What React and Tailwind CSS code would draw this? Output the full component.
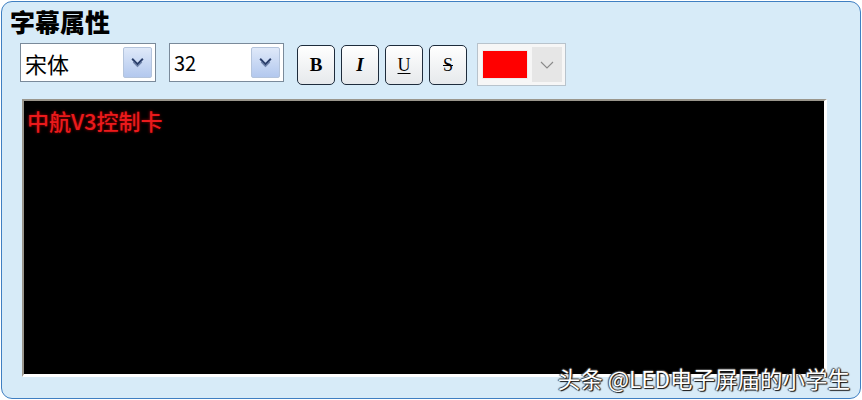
import React from "react";

const Chevron = ({ className = "" }) => (
  <svg viewBox="0 0 14 12" className={className} fill="none">
    <path d="M2 2.5 L7 7.5 L12 2.5" stroke="#2b3f6b" strokeWidth="1.8" />
    <path d="M3 5.5 L7 9.5 L11 5.5" stroke="#4a5f8b" strokeWidth="1.2" opacity="0.7" />
  </svg>
);

const Select = ({ value, width, size }) => (
  <div
    className={`flex items-center justify-between h-[39px] bg-white border border-[#7a8a9a] pl-[4px] pr-[3px] ${width}`}
  >
    <span className={`${size} leading-none text-black`} style={{ fontFamily: '"Noto Sans CJK SC", "Liberation Sans", sans-serif' }}>
      {value}
    </span>
    <div className="w-[29px] h-[31px] rounded-[2px] border border-[#b4c4dc] bg-gradient-to-b from-[#dfe9f9] to-[#b3c8ee] flex items-center justify-center">
      <Chevron className="w-[15px] h-[13px]" />
    </div>
  </div>
);

const StyleBtn = ({ children }) => (
  <div className="w-[38px] h-[40px] rounded-[5px] border-[1.5px] border-[#1e2c3c] bg-gradient-to-b from-white to-[#e6e9ec] flex items-center justify-center">
    {children}
  </div>
);

export default function App() {
  return (
    <div className="w-[862px] h-[400px] bg-white">
      <div className="w-[860px] h-[398px] ml-[1px] mt-[1px] rounded-[11px] border-[1.5px] border-[#3f7fc2] bg-[#d7ebf8] flex flex-col relative overflow-hidden">
        <div
          className="pl-[8px] pt-[4px] text-[25px] font-black leading-[30px] text-black"
          style={{ fontFamily: '"Noto Sans CJK SC", sans-serif' }}
        >
          字幕属性
        </div>
        <div className="flex items-start pl-[18px] pt-[7px]">
          <Select value="宋体" width="w-[136px]" size="text-[22px]" />
          <div className="w-[13px]" />
          <Select value="32" width="w-[115px]" size="text-[20px]" />
          <div className="flex gap-[6px] ml-[13px] mt-[2px]">
            <StyleBtn>
              <span className="text-[19px] font-bold text-black" style={{ fontFamily: '"Liberation Serif", serif' }}>B</span>
            </StyleBtn>
            <StyleBtn>
              <span className="text-[19px] font-bold italic text-black" style={{ fontFamily: '"Liberation Serif", serif' }}>I</span>
            </StyleBtn>
            <StyleBtn>
              <span className="text-[18px] text-black underline underline-offset-2" style={{ fontFamily: '"Liberation Serif", serif' }}>U</span>
            </StyleBtn>
            <StyleBtn>
              <span className="text-[18px] text-black line-through" style={{ fontFamily: '"Liberation Serif", serif' }}>S</span>
            </StyleBtn>
          </div>
          <div className="ml-[10px] w-[89px] h-[43px] border border-[#b8c3cc] bg-[#f6f6f6] flex items-center pl-[4px] gap-[4px]">
            <div className="w-[46px] h-[29px] bg-[#ff0000] border border-[#ececec]" />
            <div className="w-[30px] h-[35px] bg-[#e6e6e6] flex items-center justify-center">
              <svg viewBox="0 0 14 8" className="w-[14px] h-[8px]" fill="none">
                <path d="M1 1 L7 7 L13 1" stroke="#8a8a8a" strokeWidth="1.1" />
              </svg>
            </div>
          </div>
        </div>
        <div className="ml-[20px] mt-[13px] w-[805px] h-[278px] bg-black border-t-[2px] border-l-[2px] border-t-[#9a968c] border-l-[#9a968c] border-b-[3px] border-r-[3px] border-b-white border-r-white">
          <div
            className="pl-[3px] pt-[6px] text-[22px] leading-[26px] text-[#ea1a1c] font-medium"
            style={{ fontFamily: '"Noto Sans CJK SC", sans-serif', textShadow: "0 0 3px rgba(220,0,0,0.7)" }}
          >
            中航V3控制卡
          </div>
        </div>
        <div
          className="absolute right-[10px] bottom-[5px] text-[22.5px] leading-[30px] text-white"
          style={{
            fontFamily: '"Noto Sans CJK SC", sans-serif',
            textShadow: "1px 1px 1px #111, -1px 0 1px #444, 0 -1px 1px #444, 1px 0 1px #333",
          }}
        >
          头条 @LED电子屏届的小学生
        </div>
      </div>
    </div>
  );
}
